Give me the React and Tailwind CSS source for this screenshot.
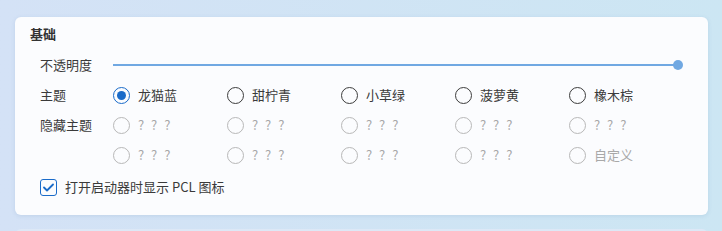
export default function App() {
  const themes = ["龙猫蓝", "甜柠青", "小草绿", "菠萝黄", "橡木棕"]
  const hidden1 = ["? ? ?", "? ? ?", "? ? ?", "? ? ?", "? ? ?"]
  const hidden2 = ["? ? ?", "? ? ?", "? ? ?", "? ? ?", "自定义"]

  const Radio = ({ label, checked, disabled }) => (
    <div className="w-[114px] flex items-center">
      <div
        className={`w-[17px] h-[17px] rounded-full border-[1.5px] flex items-center justify-center ${
          checked ? "border-[#1a6bc9]" : disabled ? "border-[#b8b8b8]" : "border-[#3c3c3c]"
        }`}
      >
        {checked && <div className="w-[9px] h-[9px] rounded-full bg-[#1a6bc9]" />}
      </div>
      <span
        className={`ml-[8px] ${disabled ? "text-[#a8a8a8]" : "text-[#3a3a3a]"} ${
          label.startsWith("?") ? "tracking-[2px]" : ""
        }`}
      >
        {label}
      </span>
    </div>
  )

  return (
    <div
      className="w-[722px] h-[231px] overflow-hidden bg-gradient-to-r from-[#d4e2f6] to-[#cce6f3] pt-[17px] pl-[15px] pr-[14px] text-[13px]"
      style={{ fontFamily: '"Noto Sans CJK SC", "Noto Sans", sans-serif' }}
    >
      <div className="h-[198px] rounded-md bg-[#fbfcfe] shadow-[0_1px_4px_rgba(80,120,170,0.15)] px-[15px] pt-[7px]">
        <div className="h-[20px] leading-[20px] font-semibold text-[#333]">基础</div>

        <div className="ml-[10px] mt-[6px]">
          <div className="h-[30px] flex items-center">
            <div className="w-[73px] text-[#3a3a3a]">不透明度</div>
            <div className="flex-1 mr-[10px] flex items-center">
              <div className="flex-1 h-[2px] bg-[#70a8e2]" />
              <div className="w-[10px] h-[10px] rounded-full bg-[#70a8e2] -ml-[5px]" />
            </div>
          </div>

          <div className="h-[30px] flex items-center">
            <div className="w-[73px] text-[#3a3a3a]">主题</div>
            {themes.map((t, i) => (
              <Radio key={t} label={t} checked={i === 0} />
            ))}
          </div>

          <div className="h-[30px] flex items-center">
            <div className="w-[73px] text-[#3a3a3a]">隐藏主题</div>
            {hidden1.map((t, i) => (
              <Radio key={i} label={t} disabled />
            ))}
          </div>

          <div className="h-[30px] flex items-center">
            <div className="w-[73px]" />
            {hidden2.map((t, i) => (
              <Radio key={i} label={t} disabled />
            ))}
          </div>

          <div className="h-[30px] mt-[2px] flex items-center">
            <div className="w-[17px] h-[17px] rounded-[3px] border-[1.5px] border-[#1a6bc9] flex items-center justify-center">
              <svg width="11" height="9" viewBox="0 0 11 9" fill="none">
                <path d="M1 4.5 L4 7.5 L10 1.5" stroke="#1a6bc9" strokeWidth="1.8" strokeLinecap="round" strokeLinejoin="round" />
              </svg>
            </div>
            <span className="ml-[8px] text-[#3a3a3a]">打开启动器时显示 PCL 图标</span>
          </div>
        </div>
      </div>
      <div className="mt-[14px] h-[20px] rounded-md bg-[#dde8f6]" />
    </div>
  )
}
